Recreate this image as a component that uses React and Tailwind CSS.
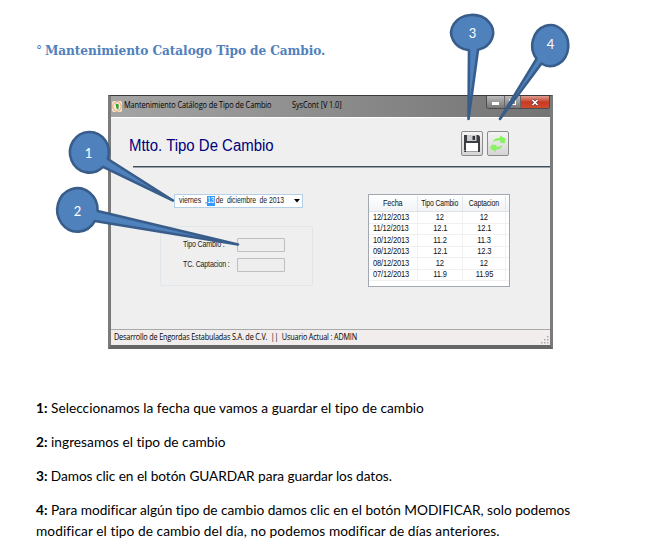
const rows = [
  ['12/12/2013', '12', '12'],
  ['11/12/2013', '12.1', '12.1'],
  ['10/12/2013', '11.2', '11.3'],
  ['09/12/2013', '12.1', '12.3'],
  ['08/12/2013', '12', '12'],
  ['07/12/2013', '11.9', '11.95'],
];

function TitleBar() {
  return (
    <div className="flex h-[21px] items-start justify-between bg-gradient-to-r from-[#a4a4a4] via-[#8c8c8c] to-[#747474]">
      <div className="flex h-[20px] items-center pl-[1px] font-['Open_Sans','Noto_Sans',sans-serif] text-[8.8px] text-black">
        <svg className="mr-[2px] h-[11px] w-[10px]" viewBox="0 0 10 11">
          <rect width="10" height="11" rx="2" fill="#f4ead8" />
          <ellipse cx="5" cy="5.5" rx="4.2" ry="4.8" fill="none" stroke="#ee9a63" strokeWidth="1" />
          <path d="M3.5 2.5 L6.8 3.5 L6.4 8.8 L4.5 7.5 Z" fill="#35a02c" />
        </svg>
        <span className="w-[168px] origin-left scale-x-[.84] whitespace-nowrap tracking-[-0.12px]">Mantenimiento Catálogo de Tipo de Cambio</span>
        <span className="origin-left scale-x-[.84] whitespace-nowrap tracking-[-0.12px]">SysCont [V 1.0]</span>
      </div>
      <div className="flex h-[13px] w-[64px] overflow-hidden rounded-b-[3px] border border-t-0 border-[#4d4d4d]">
        <div className="flex w-[18px] items-center justify-center border-r border-[#666] bg-gradient-to-b from-[#bcbcbc] to-[#777]">
          <div className="mt-[2px] h-[3px] w-[7px] bg-white" />
        </div>
        <div className="flex w-[16px] items-center justify-center border-r border-[#666] bg-gradient-to-b from-[#bcbcbc] to-[#777]">
          <div className="h-[6px] w-[7px] border border-white" />
        </div>
        <div className="flex flex-1 items-center justify-center bg-gradient-to-b from-[#dc9b8f] via-[#c63a24] to-[#d04a30]">
          <svg className="h-[7px] w-[8px]" viewBox="0 0 8 7">
            <path d="M1.5 1 L6.5 6 M6.5 1 L1.5 6" stroke="#5c3030" strokeWidth="2.8" />
            <path d="M1.5 1 L6.5 6 M6.5 1 L1.5 6" stroke="#fff" strokeWidth="1.7" />
          </svg>
        </div>
      </div>
    </div>
  );
}

function ToolButton({ children }) {
  return (
    <button className="flex h-[25px] w-[22px] items-center justify-center rounded-[2px] border border-[#8b8b8b] bg-gradient-to-b from-[#f4f4f4] to-[#d5d5d5]">
      {children}
    </button>
  );
}

function SaveIcon() {
  return (
    <svg className="h-[19px] w-[18px] shrink-0" viewBox="0 0 18 19">
      <path d="M1 1 H15.5 L17 2.5 V18 H1 Z" fill="#3e3e42" />
      <rect x="4" y="1" width="9.5" height="6" fill="#c9cdd1" />
      <rect x="9.5" y="2" width="2.5" height="4" fill="#35353a" />
      <rect x="3" y="9" width="12" height="8.5" fill="#fff" />
      <rect x="1.3" y="16" width="1" height="1" fill="#ddd" />
    </svg>
  );
}

function RefreshIcon() {
  return (
    <svg className="h-[19px] w-[18px] shrink-0" viewBox="0 0 18 19">
      <path d="M4 8 Q5 3.5 11 4 L11 1.5 L17 5 L15.5 9.5 L10.5 8.5 L12 7 Q8 5.8 4 8 Z" fill="#8af162" />
      <path d="M13.5 11 Q12.5 15.8 7 15.5 L6.5 18 L1 14 L3 10.5 L8 11.2 L6.5 12.8 Q10 13.2 13.5 11 Z" fill="#8af162" />
    </svg>
  );
}

function DatePicker() {
  return (
    <div className="ml-[63px] flex h-[14px] w-[129px] items-center border border-[#b5cfe7] bg-white pl-[4px] pr-[1px] text-[8.8px] tracking-[-0.1px]">
      <span className="w-[28px] origin-left scale-x-[.8] whitespace-pre">viernes  ,</span>
      <span className="flex h-[10px] w-[8px] items-center justify-center bg-[#3399ff] text-white">
        <span className="scale-x-[.76]">13</span>
      </span>
      <span className="w-[77px] origin-left scale-x-[.78] whitespace-pre pl-[1px]">de  diciembre  de 2013</span>
      <svg className="ml-auto mr-[1px] h-[4px] w-[6px] shrink-0" viewBox="0 0 6 4"><path d="M0 0 H6 L3 3.5 Z" fill="#000" /></svg>
    </div>
  );
}

function Field({ label }) {
  return (
    <div className="flex h-[14px] items-center">
      <span className="w-[54px] shrink-0 origin-left scale-x-[.81] whitespace-nowrap text-[8.8px] tracking-[-0.25px]">{label}</span>
      <div className="h-[14px] w-[48px] rounded-[1px] border border-[#bfbfbf] bg-[#eeeeee]" />
    </div>
  );
}

function RatesTable() {
  return (
    <div className="flex h-[93px] w-[142px] flex-col overflow-hidden border border-[#a2a8b2] bg-white text-[9px] leading-none tracking-[-0.2px] text-[#111]">
      <div className="grid h-[17px] shrink-0 grid-cols-[49px_45px_43px_1fr] border-b border-[#dfe3e8] bg-gradient-to-b from-white to-[#f1f3f5] pt-[1px] text-[8.8px]">
        <div className="flex items-center justify-center border-r border-[#e3e6ea]"><span className="scale-x-[.83]">Fecha</span></div>
        <div className="flex items-center justify-center border-r border-[#e3e6ea]"><span className="scale-x-[.78] whitespace-nowrap">Tipo Cambio</span></div>
        <div className="flex items-center justify-center border-r border-[#e3e6ea]"><span className="scale-x-[.8]">Captacion</span></div>
      </div>
      {rows.map((r) => (
        <div key={r[0]} className="grid h-[11.5px] shrink-0 grid-cols-[49px_45px_43px_1fr] border-b border-[#f0f0f0]">
          <div className="flex items-center border-r border-[#f0f0f0] pl-[4px]"><span className="origin-left scale-x-[.84]">{r[0]}</span></div>
          <div className="flex items-center justify-center border-r border-[#f0f0f0]"><span className="scale-x-[.84]">{r[1]}</span></div>
          <div className="flex items-center justify-center border-r border-[#f0f0f0]"><span className="scale-x-[.84]">{r[2]}</span></div>
        </div>
      ))}
    </div>
  );
}

function Window() {
  return (
    <div className="ml-[108px] flex h-[254px] w-[445px] flex-col border-x-[3px] border-b-[4px] border-t border-x-[#7b7b7b] border-b-[#666] border-t-[#3b3b3b] font-['Liberation_Sans',Arial,sans-serif] text-[8.8px] text-[#222]">
      <TitleBar />
      <div className="flex flex-1 flex-col border-t border-white bg-[#efefef]">
        <div className="flex h-[48px] justify-between pl-[18px] pr-[41px] pt-[13px]">
          <h2 className="origin-left scale-x-[.935] whitespace-nowrap pt-[3px] text-[16px] leading-[24px] text-[#00007b]">Mtto. Tipo De Cambio</h2>
          <div className="flex gap-[4px]">
            <ToolButton><SaveIcon /></ToolButton>
            <ToolButton><RefreshIcon /></ToolButton>
          </div>
        </div>
        <div className="ml-[22px] h-[2px] border-b border-[#9aa3ac] bg-[#3f4c5a]" />
        <div className="flex flex-1 pt-[26px]">
          <div className="w-[257px]">
            <DatePicker />
            <div className="ml-[49px] mt-[18px] flex h-[60px] w-[153px] flex-col gap-[6px] rounded-[2px] border border-[#e0e6ea] pl-[22px] pt-[11px]">
              <Field label="Tipo Cambio :" />
              <Field label="TC. Captacion :" />
            </div>
          </div>
          <RatesTable />
        </div>
        <div className="flex h-[16px] items-center justify-between border-t border-[#a9a9a9] bg-[#f1eded] pl-[3px] font-['Open_Sans','Noto_Sans',sans-serif] text-[8.8px] text-black">
          <span className="origin-left scale-x-[.825] whitespace-pre tracking-[-0.2px]">Desarrollo de Engordas Estabuladas S.A. de C.V.  ||  Usuario Actual : ADMIN</span>
          <svg className="mr-[1px] mt-[5px] h-[8px] w-[8px]" viewBox="0 0 8 8" fill="#aaa">
            <path d="M6 0h1.5v1.5H6z M3 3h1.5v1.5H3z M6 3h1.5v1.5H6z M0 6h1.5v1.5H0z M3 6h1.5v1.5H3z M6 6h1.5v1.5H6z" />
          </svg>
        </div>
      </div>
    </div>
  );
}

function Callouts() {
  return (
    <svg className="pointer-events-none absolute left-0 top-0 h-[553px] w-[653px]" viewBox="0 0 653 553">
      <g fill="#4f81bd" stroke="#385d8a" strokeWidth="2.6" strokeLinejoin="round">
        <path d="M107.8 159 A19.5 20.3 0 1 0 103 166.8 L173 200.5 Z" />
        <path d="M97.6 211 A20.2 21.7 0 1 0 94.8 221 L238 244.5 Z" />
        <path d="M478 49.8 A21 17.8 0 1 0 469 50.3 L468.5 119 Z" />
        <path d="M536.5 58.8 A18 20.5 0 1 1 541.5 63.5 L500 119 Z" />
      </g>
      <g fill="#fff" textAnchor="middle" className="font-['Lato',sans-serif] text-[13px]">
        <text x="88.5" y="158">1</text>
        <text x="77.5" y="216">2</text>
        <text x="472.5" y="38">3</text>
        <text x="550.5" y="49">4</text>
      </g>
    </svg>
  );
}

export default function App() {
  return (
    <div className="relative h-[553px] w-[653px] overflow-hidden bg-white">
      <h1 className="flex h-[95px] items-start whitespace-nowrap pl-[36px] pt-[40px] font-['DejaVu_Serif_Condensed','DejaVu_Serif',serif] text-[13.5px] font-bold leading-[20px] tracking-[-0.1px] text-[#4f81bd]">
        <span className="w-[9px] font-normal">°</span>
        <span>Mantenimiento Catalogo Tipo de Cambio.</span>
      </h1>
      <Window />
      <div className="flex flex-col gap-[13px] whitespace-nowrap pl-[36px] pt-[48px] font-['Lato',sans-serif] text-[13.7px] leading-[21px] text-black">
        <p className="tracking-[0.02px]"><b>1:</b> Seleccionamos la fecha que vamos a guardar el tipo de cambio</p>
        <p className="tracking-[0.02px]"><b>2:</b> ingresamos el tipo de cambio</p>
        <p className="tracking-[-0.06px]"><b>3:</b> Damos clic en el botón GUARDAR para guardar los datos.</p>
        <p className="tracking-[-0.03px]">
          <b>4:</b> Para modificar algún tipo de cambio damos clic en el botón MODIFICAR, solo podemos<br />
          <span className="tracking-[0.07px]">modificar el tipo de cambio del día, no podemos modificar de días anteriores.</span>
        </p>
      </div>
      <Callouts />
    </div>
  );
}
